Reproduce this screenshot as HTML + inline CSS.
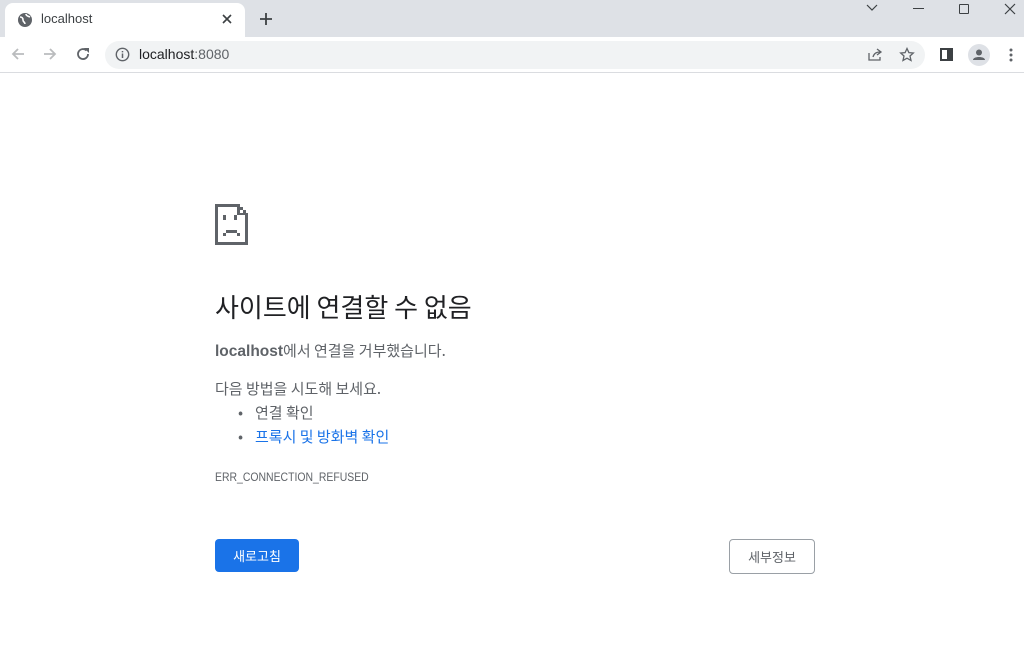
<!DOCTYPE html>
<html><head><meta charset="utf-8"><style>
*{margin:0;padding:0;box-sizing:border-box}
body{width:1024px;height:666px;background:#fff;font-family:"Liberation Sans","Noto Sans CJK KR",sans-serif;position:relative;overflow:hidden;color:#202124}
.top{position:absolute;left:0;top:0;width:1024px;height:37px;background:#dee1e6}
.tab{position:absolute;left:5px;top:3px;width:240px;height:34px;background:#fff;border-radius:8px 8px 0 0}
.bar{position:absolute;left:0;top:37px;width:1024px;height:36px;background:#fff;border-bottom:1px solid #dadce0}
.omni{position:absolute;left:105px;top:4px;width:820px;height:28px;background:#f1f3f4;border-radius:14px}
.abs{position:absolute}
.k{font-family:"Noto Sans CJK KR","Liberation Sans",sans-serif}
</style></head><body>
<div class="top"></div>
<div class="tab"></div>
<svg class="abs" style="left:17px;top:12px" width="16" height="16" viewBox="0 0 16 16"><circle cx="8" cy="8" r="7" fill="#5f6368"/><path d="M3 5c2 0 3 1 3 3s2 2 2 4M9 2c0 2 2 2 4 3" stroke="#fff" stroke-width="1.6" fill="none"/></svg>
<div class="abs" style="left:41px;top:11px;font-size:13px;color:#3c4043">localhost</div>
<svg class="abs" style="left:222px;top:14px" width="10" height="10"><path d="M1 1L9 9M9 1L1 9" stroke="#3c4043" stroke-width="1.6"/></svg>
<svg class="abs" style="left:259px;top:12px" width="14" height="14"><path d="M7 1V13M1 7H13" stroke="#3c4043" stroke-width="1.8"/></svg>
<svg class="abs" style="left:866px;top:4px" width="12" height="8"><path d="M1 1L6 6L11 1" stroke="#3c4043" stroke-width="1.2" fill="none"/></svg>
<div class="abs" style="left:913px;top:8px;width:11px;height:1px;background:#3c4043"></div>
<div class="abs" style="left:959px;top:4px;width:10px;height:10px;border:1.2px solid #3c4043;border-radius:1px"></div>
<svg class="abs" style="left:1004px;top:3px" width="12" height="12"><path d="M1 1L11 11M11 1L1 11" stroke="#3c4043" stroke-width="1.2"/></svg>
<div class="bar"><div class="omni"></div></div>
<svg class="abs" style="left:10px;top:46px" width="16" height="16"><path d="M14 8H3M8 3L3 8L8 13" stroke="#babcbe" stroke-width="1.8" fill="none"/></svg>
<svg class="abs" style="left:42px;top:46px" width="16" height="16"><path d="M2 8H13M8 3L13 8L8 13" stroke="#babcbe" stroke-width="1.8" fill="none"/></svg>
<svg class="abs" style="left:75px;top:46px" width="16" height="16"><path d="M13 8A5 5 0 1 1 11.5 4.5" stroke="#5f6368" stroke-width="1.8" fill="none"/><path d="M9 2H14V7Z" fill="#5f6368"/></svg>
<svg class="abs" style="left:115px;top:47px" width="15" height="15"><circle cx="7.5" cy="7.5" r="6.2" stroke="#5f6368" stroke-width="1.4" fill="none"/><path d="M7.5 6.5V11M7.5 4V5.4" stroke="#5f6368" stroke-width="1.5"/></svg>
<div class="abs" style="left:139px;top:46px;font-size:14px;color:#202124">localhost<span style="color:#5f6368">:8080</span></div>
<svg class="abs" style="left:867px;top:47px" width="16" height="15"><path d="M2 6V13H13V10M6 10C7 6 10 5 13 5M10 2L14 5L10 8" stroke="#5f6368" stroke-width="1.3" fill="none"/></svg>
<svg class="abs" style="left:899px;top:47px" width="16" height="15"><path d="M8 1.5L9.9 5.6L14.3 6L11 9L12 13.5L8 11.2L4 13.5L5 9L1.7 6L6.1 5.6Z" stroke="#5f6368" stroke-width="1.3" fill="none"/></svg>
<div class="abs" style="left:940px;top:48px;width:13px;height:13px;border:2px solid #3c4043;border-right-width:6px"></div>
<svg class="abs" style="left:968px;top:44px" width="22" height="22"><circle cx="11" cy="11" r="11" fill="#dee1e6"/><circle cx="11" cy="8.5" r="3" fill="#5f6368"/><path d="M5 16C5 12 17 12 17 16Z" fill="#5f6368"/></svg>
<svg class="abs" style="left:1009px;top:48px" width="4" height="14"><circle cx="2" cy="2" r="1.5" fill="#5f6368"/><circle cx="2" cy="7" r="1.5" fill="#5f6368"/><circle cx="2" cy="12" r="1.5" fill="#5f6368"/></svg>

<svg class="abs" style="left:215px;top:204px" width="34" height="42" viewBox="0 0 34 42" shape-rendering="crispEdges" fill="#5f6368">
<rect x="0" y="0" width="22" height="3"/>
<rect x="0" y="0" width="3" height="41"/>
<rect x="0" y="38" width="33" height="3"/>
<rect x="30" y="11" width="3" height="30"/>
<rect x="22" y="0" width="3" height="3"/>
<rect x="25" y="3" width="3" height="3"/>
<rect x="28" y="6" width="3" height="3"/>
<rect x="22" y="3" width="3" height="8"/>
<rect x="22" y="9" width="11" height="2"/>
<rect x="8" y="11" width="3" height="5"/>
<rect x="19" y="11" width="3" height="5"/>
<rect x="11" y="26" width="11" height="3"/>
<rect x="8" y="29" width="3" height="3"/>
<rect x="22" y="29" width="3" height="3"/>
</svg>
<div class="abs k" style="left:215px;top:288px;font-size:26px;color:#202124">사이트에 연결할 수 없음</div>
<div class="abs k" style="left:215px;top:340px;font-size:15px;color:#5f6368"><b style="color:#5f6368;font-family:'Liberation Sans',sans-serif;font-size:15.5px">localhost</b>에서 연결을 거부했습니다.</div>
<div class="abs k" style="left:215px;top:378px;font-size:15px;color:#5f6368">다음 방법을 시도해 보세요.</div>
<div class="abs k" style="left:255px;top:402px;font-size:15px;color:#5f6368"><span style="position:absolute;left:-17px">•</span>연결 확인</div>
<div class="abs k" style="left:255px;top:426px;font-size:15px;color:#1a73e8"><span style="position:absolute;left:-17px;color:#5f6368">•</span>프록시 및 방화벽 확인</div>
<div class="abs" style="left:215px;top:470px;font-size:12px;color:#5f6368;transform:scaleX(0.87);transform-origin:0 0">ERR_CONNECTION_REFUSED</div>
<div class="abs k" style="left:215px;top:539px;width:84px;height:33px;background:#1a73e8;border-radius:4px;color:#fff;font-size:13px;text-align:center;line-height:33px">새로고침</div>
<div class="abs k" style="left:729px;top:539px;width:86px;height:35px;border:1px solid #9aa0a6;border-radius:4px;color:#5f6368;font-size:13px;text-align:center;line-height:33px">세부정보</div>
</body></html>
